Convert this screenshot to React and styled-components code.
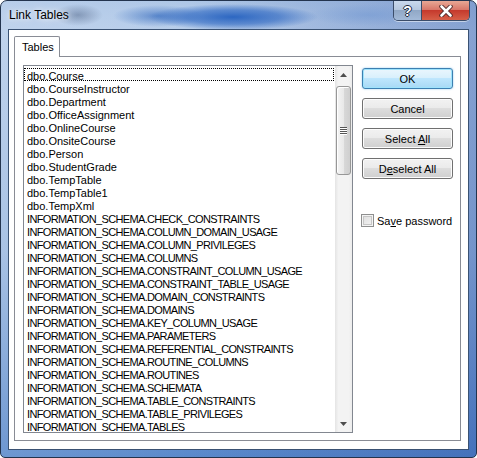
import React from "react";
import styled, { createGlobalStyle } from "styled-components";

const GlobalStyle = createGlobalStyle`
  html, body {
    margin: 0;
    padding: 0;
    background: #ffffff;
  }
  body {
    font-family: "Liberation Sans", Arial, sans-serif;
  }
`;

const tables = [
  "dbo.Course",
  "dbo.CourseInstructor",
  "dbo.Department",
  "dbo.OfficeAssignment",
  "dbo.OnlineCourse",
  "dbo.OnsiteCourse",
  "dbo.Person",
  "dbo.StudentGrade",
  "dbo.TempTable",
  "dbo.TempTable1",
  "dbo.TempXml",
  "INFORMATION_SCHEMA.CHECK_CONSTRAINTS",
  "INFORMATION_SCHEMA.COLUMN_DOMAIN_USAGE",
  "INFORMATION_SCHEMA.COLUMN_PRIVILEGES",
  "INFORMATION_SCHEMA.COLUMNS",
  "INFORMATION_SCHEMA.CONSTRAINT_COLUMN_USAGE",
  "INFORMATION_SCHEMA.CONSTRAINT_TABLE_USAGE",
  "INFORMATION_SCHEMA.DOMAIN_CONSTRAINTS",
  "INFORMATION_SCHEMA.DOMAINS",
  "INFORMATION_SCHEMA.KEY_COLUMN_USAGE",
  "INFORMATION_SCHEMA.PARAMETERS",
  "INFORMATION_SCHEMA.REFERENTIAL_CONSTRAINTS",
  "INFORMATION_SCHEMA.ROUTINE_COLUMNS",
  "INFORMATION_SCHEMA.ROUTINES",
  "INFORMATION_SCHEMA.SCHEMATA",
  "INFORMATION_SCHEMA.TABLE_CONSTRAINTS",
  "INFORMATION_SCHEMA.TABLE_PRIVILEGES",
  "INFORMATION_SCHEMA.TABLES",
];

function App() {
  return (
    <>
      <GlobalStyle />
      <Window>
        <TitleBar>
          <Title>Link Tables</Title>
          <CaptionButtons>
            <HelpButton>?</HelpButton>
            <CloseButton>
              <svg width="14" height="12" viewBox="0 0 14 12">
                <path
                  d="M2.5 1.5 L11.5 10.5 M11.5 1.5 L2.5 10.5"
                  stroke="#4a2626"
                  strokeWidth="4.4"
                  strokeLinecap="round"
                />
                <path
                  d="M2.5 1.5 L11.5 10.5 M11.5 1.5 L2.5 10.5"
                  stroke="#ffffff"
                  strokeWidth="2.6"
                  strokeLinecap="round"
                />
              </svg>
            </CloseButton>
          </CaptionButtons>
        </TitleBar>
        <Client>
          <TabStrip>
            <Tab>Tables</Tab>
          </TabStrip>
          <TabPage>
            <ListBox>
              <ListItems>
                {tables.map((name, i) => (
                  <ListItem key={name} $focused={i === 0} $caps={name.startsWith("INFO")}>
                    {name}
                  </ListItem>
                ))}
              </ListItems>
              <ScrollBar>
                <ArrowButton>
                  <svg width="7" height="4" viewBox="0 0 7 4">
                    <path d="M3.5 0 L7 4 L0 4 Z" fill="#4d4d4d" />
                  </svg>
                </ArrowButton>
                <Track>
                  <Thumb>
                    <Grip />
                    <Grip />
                    <Grip />
                    <Grip />
                  </Thumb>
                </Track>
                <ArrowButton>
                  <svg width="7" height="4" viewBox="0 0 7 4">
                    <path d="M0 0 L7 0 L3.5 4 Z" fill="#4d4d4d" />
                  </svg>
                </ArrowButton>
              </ScrollBar>
            </ListBox>
            <SideColumn>
              <ButtonStack>
                <PushButton $default>
                  <ButtonLabel>OK</ButtonLabel>
                </PushButton>
                <PushButton>
                  <ButtonLabel>Cancel</ButtonLabel>
                </PushButton>
                <PushButton>
                  <ButtonLabel>
                    Select <u>A</u>ll
                  </ButtonLabel>
                </PushButton>
                <PushButton>
                  <ButtonLabel>
                    D<u>e</u>select All
                  </ButtonLabel>
                </PushButton>
              </ButtonStack>
              <CheckRow>
                <CheckBox />
                <CheckLabel>
                  Sa<u>v</u>e password
                </CheckLabel>
              </CheckRow>
            </SideColumn>
          </TabPage>
        </Client>
      </Window>
    </>
  );
}

const Window = styled.div`
  width: 477px;
  height: 458px;
  box-sizing: border-box;
  border: 1px solid #23344e;
  border-radius: 7px 7px 5px 5px;
  overflow: hidden;
  display: flex;
  flex-direction: column;
  padding: 0 7px 7px 7px;
  background:
    linear-gradient(90deg, rgba(255, 255, 255, 0.12) 0%, rgba(255, 255, 255, 0) 40%, rgba(20, 60, 150, 0.3) 100%),
    linear-gradient(180deg, #aec7e7 0%, #b7cdea 6%, #9dbae1 55%, #5a89cb 100%);
`;

const TitleBar = styled.div`
  height: 28px;
  display: flex;
  align-items: flex-start;
  justify-content: space-between;
  margin-right: -1px;
  background-image:
    radial-gradient(closest-side, rgba(38, 98, 192, 0.95), rgba(38, 98, 192, 0.6) 55%, rgba(38, 98, 192, 0)),
    radial-gradient(closest-side, rgba(60, 112, 192, 0.7), rgba(60, 112, 192, 0)),
    radial-gradient(closest-side, rgba(80, 100, 135, 0.5), rgba(80, 100, 135, 0)),
    radial-gradient(closest-side, rgba(110, 150, 210, 0.5), rgba(110, 150, 210, 0));
  background-size: 170px 26px, 90px 22px, 50px 22px, 120px 22px;
  background-position: 140px 3px, 105px 4px, 45px 3px, 300px 3px;
  background-repeat: no-repeat;
`;

const Title = styled.span`
  font-family: "Liberation Sans", Arial, sans-serif;
  font-size: 12px;
  color: #000000;
  line-height: 28px;
  padding-left: 1px;
  text-shadow: 0 0 8px rgba(255, 255, 255, 0.9), 0 0 4px rgba(255, 255, 255, 0.7);
`;

const CaptionButtons = styled.div`
  display: flex;
  height: 19px;
  border: 1px solid #3b4d6a;
  border-top: none;
  border-radius: 0 0 5px 5px;
  overflow: hidden;
  box-shadow: 0 1px 0 rgba(255, 255, 255, 0.5);
`;

const HelpButton = styled.div`
  width: 27px;
  display: flex;
  align-items: center;
  justify-content: center;
  font-family: "Liberation Sans", Arial, sans-serif;
  font-weight: bold;
  font-size: 14px;
  color: #ffffff;
  text-shadow: 1px 0 0 #1c2a3f, -1px 0 0 #1c2a3f, 0 1px 0 #1c2a3f, 0 -1px 0 #1c2a3f;
  background: linear-gradient(180deg, #c9d9ed 0%, #b6c8df 45%, #91a8c6 50%, #a3bad8 100%);
  border-right: 1px solid #3b4d6a;
`;

const CloseButton = styled.div`
  width: 47px;
  display: flex;
  align-items: center;
  justify-content: center;
  background: linear-gradient(180deg, #e8a895 0%, #d9786a 45%, #c53a2d 50%, #d65f48 100%);
`;

const Client = styled.div`
  flex: 1;
  display: flex;
  flex-direction: column;
  background: #ffffff;
  border: 1px solid #3a5273;
  padding: 6px 7px 8px 5px;
  box-sizing: border-box;
`;

const TabStrip = styled.div`
  display: flex;
  height: 20px;
  position: relative;
  z-index: 1;
`;

const Tab = styled.div`
  width: 46px;
  height: 21px;
  box-sizing: border-box;
  border: 1px solid #898c95;
  border-bottom: none;
  border-radius: 2px 2px 0 0;
  background: #ffffff;
  font-family: "Liberation Sans", Arial, sans-serif;
  font-size: 11px;
  color: #000000;
  padding: 4px 0 0 7px;
`;

const TabPage = styled.div`
  flex: 1;
  display: flex;
  gap: 9px;
  border: 1px solid #898c95;
  padding: 8px 7px 7px 8px;
  background: #ffffff;
`;

const ListBox = styled.div`
  width: 330px;
  height: 368px;
  box-sizing: border-box;
  border: 1px solid #828790;
  display: flex;
`;

const ListItems = styled.div`
  flex: 1;
  padding-top: 2px;
  display: flex;
  flex-direction: column;
  overflow: hidden;
`;

const ListItem = styled.div`
  height: 13px;
  box-sizing: border-box;
  padding: 1px 0 0 2px;
  font-family: "Liberation Sans", Arial, sans-serif;
  font-size: 11px;
  line-height: 12px;
  color: #000000;
  white-space: nowrap;
  letter-spacing: ${(p) => (p.$caps ? "-0.65px" : "0")};
  border: 1px dotted ${(p) => (p.$focused ? "#000000" : "transparent")};
  margin-right: 1px;
`;

const ScrollBar = styled.div`
  width: 17px;
  display: flex;
  flex-direction: column;
  background: linear-gradient(90deg, #e4e4e4 0%, #f3f3f3 20%, #f3f3f3 80%, #ececec 100%);
`;

const ArrowButton = styled.div`
  height: 17px;
  display: flex;
  align-items: center;
  justify-content: center;
`;

const Track = styled.div`
  flex: 1;
  padding: 3px 0;
`;

const Thumb = styled.div`
  height: 89px;
  margin: 0 1px;
  box-sizing: border-box;
  border: 1px solid #979797;
  border-radius: 3px;
  background: linear-gradient(90deg, #f4f4f4 0%, #e9e9e9 50%, #d9d9d9 51%, #cfcfcf 100%);
  box-shadow: inset 1px 1px 0 #ffffff;
  display: flex;
  flex-direction: column;
  align-items: center;
  justify-content: center;
  gap: 1px;
`;

const Grip = styled.div`
  width: 7px;
  height: 1px;
  background: #555555;
  box-shadow: 0 1px 0 #ffffff;
`;

const SideColumn = styled.div`
  width: 91px;
  display: flex;
  flex-direction: column;
  padding-top: 3px;
`;

const ButtonStack = styled.div`
  display: flex;
  flex-direction: column;
  gap: 9px;
`;

const PushButton = styled.div`
  height: 21px;
  box-sizing: border-box;
  border: 1px solid ${(p) => (p.$default ? "#3c7fb1" : "#707070")};
  border-radius: 3px;
  display: flex;
  align-items: center;
  justify-content: center;
  color: #000000;
  background: ${(p) =>
    p.$default
      ? "linear-gradient(180deg, #eaf6fd 0%, #d9f0fc 45%, #bee6fd 50%, #a7d9f5 100%)"
      : "linear-gradient(180deg, #f2f2f2 0%, #ebebeb 45%, #dddddd 50%, #cfcfcf 100%)"};
  box-shadow: ${(p) =>
    p.$default ? "inset 0 0 0 1px #9ee3fc, 0 0 2px rgba(60, 160, 230, 0.6)" : "inset 0 0 0 1px #fcfcfc"};
`;

const ButtonLabel = styled.span`
  font-family: "Liberation Sans", Arial, sans-serif;
  font-size: 11px;
  white-space: pre;

  u {
    text-decoration: underline;
    text-underline-offset: 1px;
  }
`;

const CheckRow = styled.div`
  display: flex;
  align-items: center;
  gap: 3px;
  margin-top: 35px;
  margin-left: -1px;
`;

const CheckBox = styled.div`
  width: 13px;
  height: 13px;
  box-sizing: border-box;
  border: 1px solid #8e8f8f;
  background: linear-gradient(135deg, #dcdcdc 0%, #f4f4f4 100%);
  box-shadow: inset 0 0 0 1px #f4f4f4, inset 0 0 0 2px #c6c6c6;
`;

const CheckLabel = styled.span`
  font-family: "Liberation Sans", Arial, sans-serif;
  font-size: 11px;
  color: #000000;
  white-space: nowrap;
`;

export default App;
